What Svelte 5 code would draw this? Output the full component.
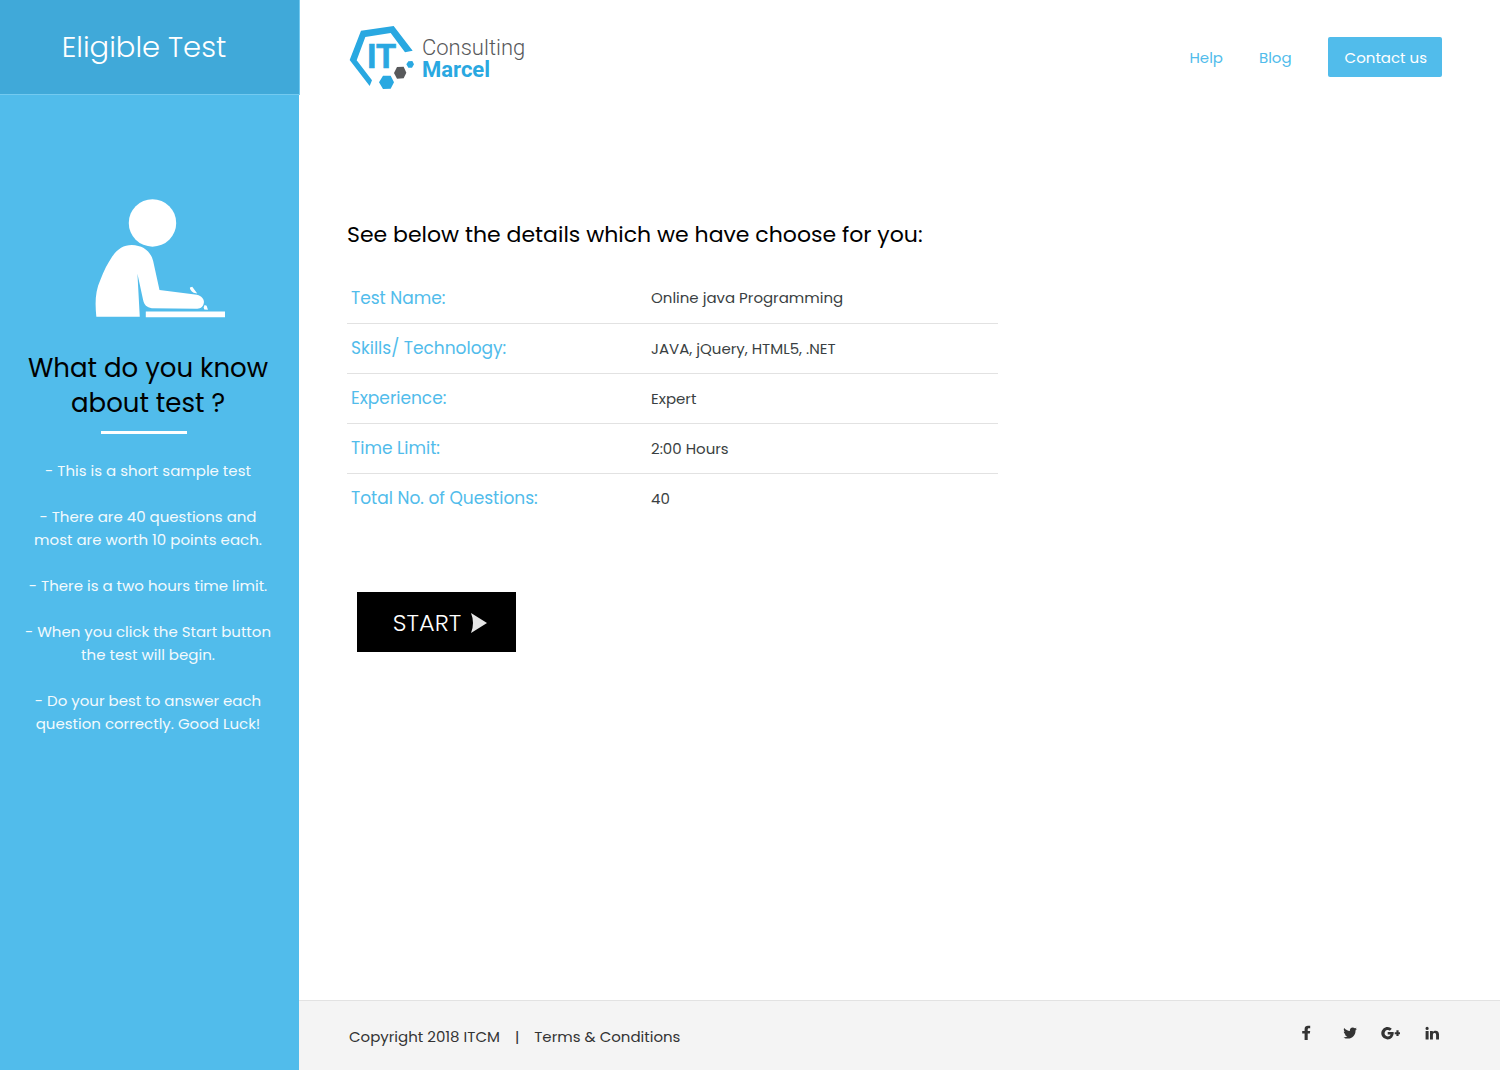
<script>
  const details = [
    ['Test Name:', 'Online java Programming'],
    ['Skills/ Technology:', 'JAVA, jQuery, HTML5, .NET'],
    ['Experience:', 'Expert'],
    ['Time Limit:', '2:00 Hours'],
    ['Total No. of Questions:', '40'],
  ];
  const notes = [
    ['- This is a short sample test'],
    ['- There are 40 questions and', 'most are worth 10 points each.'],
    ['- There is a two hours time limit.'],
    ['- When you click the Start button', 'the test will begin.'],
    ['- Do your best to answer each', 'question correctly. Good Luck!'],
  ];
</script>

<div class="page">
  <aside>
    <div class="title">Eligible Test</div>
    <div class="about">
      <svg class="student" viewBox="46 40 392 358" aria-hidden="true">
        <circle cx="218" cy="114" r="71" />
        <path d="M50 395C46 355 46 320 62 285C72 258 84 235 98 214C113 192 132 180 156 180C190 181 213 199 220 228L239 315L351 329C365 333 372 341 372 351C371 364 363 371 352 371L216 369C201 368 193 359 190 345L173 266L180 395Z" />
        <path d="M198 379H435V396H198Z" />
        <path d="M330 307L337 305L352 325L341 323Q329 314 330 307ZM374 360L380 362L384 374L373 373L371 367Z" />
      </svg>
      <h2>What do you know<br />about test ?</h2>
      <div class="rule"></div>
      <div class="notes">
        {#each notes as lines}
          <p>{#each lines as line}<span>{line}</span>{/each}</p>
        {/each}
      </div>
    </div>
  </aside>

  <div class="content">
    <header>
      <a class="logo" href="#home" aria-label="IT Consulting Marcel">
        <svg viewBox="28 30 195 195">
          <path fill="#29a8e1" d="M30 135L64 47L162 33L219 107L196 112L153 54L77 66L51 136L97 196L90 213Z" />
          <path fill="#29a8e1" d="M130 182H153L163 202L153 221L130 222L118 202ZM206 139L218 138L223 148L217 158L206 158L200 148Z" />
          <path fill="#58595b" d="M172 156L192 155L200 173L192 190L172 191L163 174Z" />
          <text x="82" y="159">IT</text>
        </svg>
        <span class="brand"><span>Consulting</span><b>Marcel</b></span>
      </a>
      <nav>
        <a href="#help">Help</a>
        <a href="#blog">Blog</a>
        <a class="contact" href="#contact">Contact us</a>
      </nav>
    </header>

    <main>
      <h1>See below the details which we have choose for you:</h1>
      <table>
        <tbody>
          {#each details as [label, value]}
            <tr><th scope="row">{label}</th><td>{value}</td></tr>
          {/each}
        </tbody>
      </table>
      <button type="button">START
        <svg viewBox="0 0 16 20" aria-hidden="true"><path d="M0 0L16 10L0 20Q4 10 0 0Z" /></svg>
      </button>
    </main>

    <footer>
      <div class="legal">
        <span>Copyright 2018 ITCM</span><span>|</span><a href="#terms">Terms &amp; Conditions</a>
      </div>
      <div class="social">
        <a href="#facebook" aria-label="Facebook"><svg viewBox="-1 0 20 16"><path d="M7.6 15V8.6H5.2V6H7.6V4C7.6 1.8 9 .7 11 .7H13.2V3.2H12C11.1 3.2 10.7 3.6 10.7 4.4V6H13.2L12.8 8.6H10.7V15Z" /></svg></a>
        <a href="#twitter" aria-label="Twitter"><svg viewBox="-2 0 20 16"><path d="M3.5 12.4C5 12.5 6.4 12.1 7.4 11.3C6.1 11.2 5.2 10.4 4.8 9.3H6C4.6 8.9 3.8 7.8 3.8 6.4L5 6.7C3.8 5.8 3.4 4.3 4.2 3C5.7 4.8 7.6 5.8 9.9 5.9C9.5 4 10.9 2.4 12.7 2.4C13.5 2.4 14.3 2.8 14.8 3.3L16.6 2.7L15.4 4.2L17 3.8L15.5 5.4C15.7 10 12.3 13.6 8 13.6C6.3 13.6 4.7 13.2 3.5 12.4Z" /></svg></a>
        <a href="#google" aria-label="Google Plus"><svg viewBox="-1 0 20 16"><path d="M12.6 7H6.7V9.5H9.6C9.2 10.7 8.2 11.4 6.8 11.4A3.2 3.2 0 1 1 8.8 5.7L10.8 3.7A6.2 6.2 0 1 0 12.6 7ZM15.4 5.3H17.6V7.2H19.4V9.2H17.6V11H15.4V9.2H13.7V7.2H15.4Z" /></svg></a>
        <a href="#linkedin" aria-label="LinkedIn"><svg viewBox="0 0 20 16"><path d="M3.6 6H6.6V14.4H3.6ZM5.1 1.8A1.6 1.6 0 1 1 5.1 5A1.6 1.6 0 1 1 5.1 1.8ZM8 6H10.8V7.1C12.3 5 17 5.2 17 9.2V14.4H14.1V9.9C14.1 7.5 10.9 7.5 10.9 9.9V14.4H8Z" /></svg></a>
      </div>
    </footer>
  </div>
</div>

<style>
  :global(body) { margin: 0; }
  .page {
    display: flex;
    min-height: 100vh;
    font-family: Poppins, Inter, sans-serif;
    font-size: 15px;
    background: #fff;
    color: #3a3f42;
  }
  a { color: inherit; text-decoration: none; }
  aside {
    width: 299px;
    flex: none;
    background: #51bceb;
    color: #fff;
    text-align: center;
  }
  .title {
    box-sizing: border-box;
    height: 95px;
    margin-right: -1px;
    padding: 1px 11px 0 0;
    border-right: 1px solid #73caf0;
    border-bottom: 1px solid #73caf0;
    background: #40a9d9;
    font-size: 29px;
    font-weight: 300;
    line-height: 93px;
  }
  .about { padding: 103px 0 40px; }
  .student { display: block; width: 131px; height: 120px; margin: 0 auto 33px 95px; fill: #fff; }
  h2 { margin: 0; padding-right: 3px; font-size: 26px; font-weight: 400; line-height: 35px; color: #000; }
  .rule { width: 86px; height: 3px; margin: 10px auto 25px 101px; background: #fff; }
  .notes { padding-right: 3px; }
  .notes p { margin: 0 0 23px; color: #f3fafd; line-height: 23px; }
  .notes span { display: block; }
  .content { flex: 1; display: flex; flex-direction: column; min-width: 0; }
  header { display: flex; justify-content: space-between; align-items: center; padding: 25px 58px 0 50px; }
  .logo { display: flex; align-items: center; gap: 8px; }
  .logo svg { width: 65px; height: 65px; }
  .logo text { font: 700 98px Roboto, sans-serif; fill: #29a8e1; stroke: #29a8e1; stroke-width: 2px; }
  .brand { display: flex; flex-direction: column; padding-top: 3px; font: 300 22px/22px Roboto, sans-serif; color: #58595b; }
  .brand b { font-weight: 700; color: #29a8e1; }
  nav { display: flex; align-items: baseline; gap: 36px; margin-bottom: 2px; color: #51bceb; }
  .contact { padding: 2px 15px 0 17px; border-radius: 2px; background: #51bceb; color: #fff; line-height: 38px; }
  main { flex: 1; padding: 129px 48px 40px; }
  h1 { margin: 0 0 22px; font-size: 22px; font-weight: 400; line-height: 32px; color: #000; }
  table { width: 100%; max-width: 651px; border-collapse: collapse; table-layout: fixed; }
  th, td { box-sizing: border-box; height: 50px; padding: 0 4px; text-align: left; font-weight: 400; }
  th { width: 300px; font-size: 17px; color: #51bceb; }
  tr:not(:last-child) { border-bottom: 1px solid #e2e2e2; }
  button {
    display: flex;
    align-items: center;
    justify-content: center;
    gap: 10px;
    height: 60px;
    width: 159px;
    margin: 69px 0 0 10px;
    padding: 1px 0 0 7px;
    border: 0;
    background: #000;
    color: #fff;
    font: 300 24px Poppins, Inter, sans-serif;
  }
  button svg { width: 16px; height: 20px; fill: #e6e6e6; }
  footer {
    display: flex;
    align-items: center;
    justify-content: space-between;
    box-sizing: border-box;
    height: 70px;
    padding: 0 58px 0 50px;
    border-top: 1px solid #e2e2e2;
    background: #f4f4f4;
    color: #333;
  }
  .legal { display: flex; gap: 15px; padding-top: 1px; }
  .social { display: flex; gap: 22px; padding-bottom: 5px; }
  .social svg { display: block; width: 20px; height: 16px; fill: #333; }
</style>
